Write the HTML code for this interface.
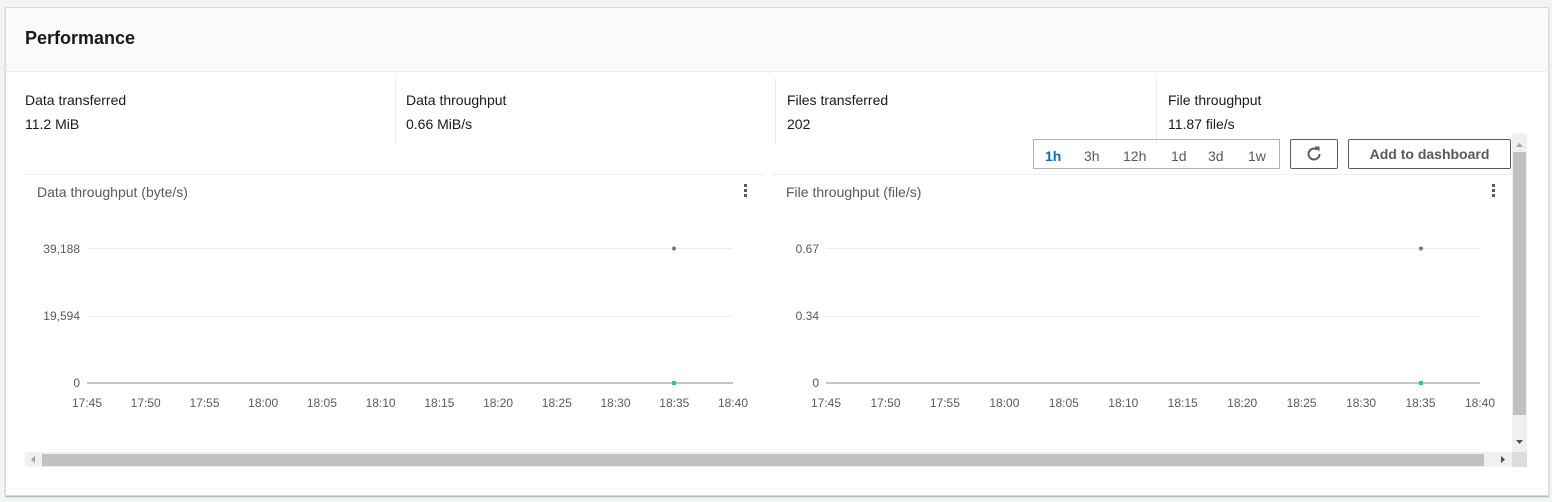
<!DOCTYPE html>
<html><head><meta charset="utf-8"><style>
body{margin:0;width:1552px;height:502px;background:#f2f3f3;font-family:"Liberation Sans",Arial,sans-serif;position:relative;overflow:hidden}
.a{position:absolute}
.panel{left:5px;top:7px;width:1542px;height:487px;background:#fff;border:1px solid #d5dbdb;box-shadow:0 1px 1px rgba(0,28,36,.3)}
.hdr{left:6px;top:8px;width:1541px;height:63px;background:#fafafa;border-bottom:1px solid #eaeded}
.t{font-size:14px;color:#16191f}
.lbl{font-size:14px;color:#545b64}
</style></head><body>
<div class="a panel"></div>
<div class="a hdr"></div>
<div class="a" style="left:25px;top:28px;font-size:18px;font-weight:bold;color:#16191f">Performance</div>

<div class="a t" style="left:25px;top:92px">Data transferred</div>
<div class="a t" style="left:25px;top:116px">11.2 MiB</div>
<div class="a" style="left:395px;top:78px;width:1px;height:66px;background:#eaeded"></div>
<div class="a t" style="left:406px;top:92px">Data throughput</div>
<div class="a t" style="left:406px;top:116px">0.66 MiB/s</div>
<div class="a" style="left:775px;top:78px;width:1px;height:66px;background:#eaeded"></div>
<div class="a t" style="left:787px;top:92px">Files transferred</div>
<div class="a t" style="left:787px;top:116px">202</div>
<div class="a" style="left:1156px;top:78px;width:1px;height:66px;background:#eaeded"></div>
<div class="a t" style="left:1168px;top:92px">File throughput</div>
<div class="a t" style="left:1168px;top:116px">11.87 file/s</div>

<div class="a" style="left:1033px;top:139px;width:245px;height:28px;border:1px solid #aab7b8;font-size:14px;color:#545b64">
<span class="a" style="left:11px;top:8px;color:#0073bb;font-weight:bold">1h</span>
<span class="a" style="left:50px;top:8px">3h</span>
<span class="a" style="left:89px;top:8px">12h</span>
<span class="a" style="left:137px;top:8px">1d</span>
<span class="a" style="left:174px;top:8px">3d</span>
<span class="a" style="left:214px;top:8px">1w</span>
</div>
<div class="a" style="left:1290px;top:139px;width:46px;height:28px;border:1px solid #545b64;border-radius:2px">
<svg class="a" style="left:14px;top:5px" width="18" height="18" viewBox="0 0 18 18"><path d="M14.5 9A5.5 5.5 0 1 1 12.3 4.6" fill="none" stroke="#545b64" stroke-width="2"/><path d="M9.5 1.5L14.5 1.5L14.5 6.5Z" fill="#545b64"/></svg>
</div>
<div class="a" style="left:1348px;top:139px;width:161px;height:28px;border:1px solid #545b64;border-radius:2px;font-size:14px;font-weight:bold;color:#545b64;text-align:center;line-height:28px">Add to dashboard</div>

<div class="a" style="left:25px;top:174px;width:1487px;height:1px;background:#eaeded"></div>
<div class="a" style="left:764px;top:174px;width:9px;height:278px;background:#fff"></div>
<div class="a lbl" style="left:37px;top:184px">Data throughput (byte/s)</div>
<div class="a lbl" style="left:786px;top:184px">File throughput (file/s)</div>

<svg class="a" style="left:0;top:0" width="1552" height="502" font-family="Liberation Sans,Arial,sans-serif" font-size="12" fill="#545b64">
<g fill="#545b64"><rect x="744" y="184" width="3" height="3"/><rect x="744" y="189" width="3" height="3"/><rect x="744" y="194" width="3" height="3"/>
<rect x="1492" y="184" width="3" height="3"/><rect x="1492" y="189" width="3" height="3"/><rect x="1492" y="194" width="3" height="3"/></g>
<g stroke="#eaeded"><line x1="87" y1="248.5" x2="733" y2="248.5"/><line x1="87" y1="316.5" x2="733" y2="316.5"/>
<line x1="826" y1="248.5" x2="1480" y2="248.5"/><line x1="826" y1="316.5" x2="1480" y2="316.5"/></g>
<g stroke="#c6c6c6" stroke-width="2"><line x1="87" y1="383" x2="733" y2="383"/><line x1="826" y1="383" x2="1480" y2="383"/></g>
<g text-anchor="end"><text x="80" y="253">39,188</text><text x="80" y="320">19,594</text><text x="80" y="387">0</text>
<text x="819" y="253">0.67</text><text x="819" y="320">0.34</text><text x="819" y="387">0</text></g>
<g text-anchor="middle">
<text x="87" y="407">17:45</text><text x="145.7" y="407">17:50</text><text x="204.5" y="407">17:55</text><text x="263.2" y="407">18:00</text><text x="321.9" y="407">18:05</text><text x="380.6" y="407">18:10</text><text x="439.4" y="407">18:15</text><text x="498.1" y="407">18:20</text><text x="556.8" y="407">18:25</text><text x="615.5" y="407">18:30</text><text x="674.3" y="407">18:35</text><text x="733" y="407">18:40</text>
<text x="826" y="407">17:45</text><text x="885.5" y="407">17:50</text><text x="944.9" y="407">17:55</text><text x="1004.4" y="407">18:00</text><text x="1063.8" y="407">18:05</text><text x="1123.3" y="407">18:10</text><text x="1182.7" y="407">18:15</text><text x="1242.2" y="407">18:20</text><text x="1301.6" y="407">18:25</text><text x="1361.1" y="407">18:30</text><text x="1420.5" y="407">18:35</text><text x="1480" y="407">18:40</text>
</g>
<circle cx="674" cy="248.5" r="2" fill="#777"/><circle cx="1421" cy="248.5" r="2" fill="#777"/>
<rect x="672" y="381" width="4" height="4" fill="#2ec0c0"/><rect x="1419" y="381" width="4" height="4" fill="#2ec0c0"/>
<rect x="1512" y="133" width="15" height="319" fill="#f0f0f0"/>
<rect x="1513" y="152" width="13" height="263" fill="#c1c1c1"/>
<path d="M1516 147L1523 147L1519.5 143Z" fill="#a3a3a3"/>
<path d="M1516 440L1523 440L1519.5 444Z" fill="#505050"/>
<rect x="25" y="452" width="1487" height="15" fill="#f0f0f0"/>
<rect x="1512" y="452" width="15" height="15" fill="#dcdcdc"/>
<rect x="42" y="454" width="1442" height="12" fill="#c1c1c1"/>
<path d="M35 456L35 463L31 459.5Z" fill="#a3a3a3"/>
<path d="M1501 456L1501 463L1505 459.5Z" fill="#505050"/>
</svg>
</body></html>
